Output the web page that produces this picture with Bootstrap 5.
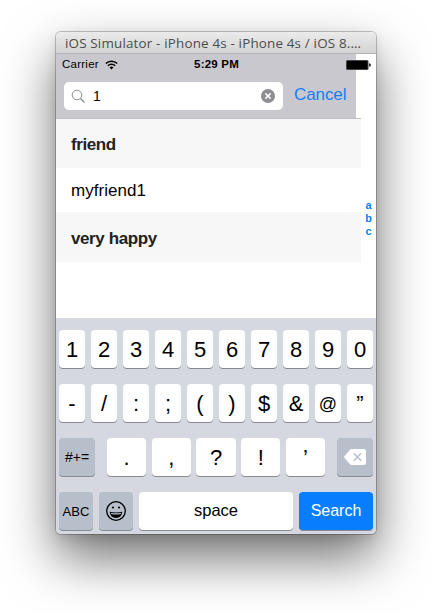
<!DOCTYPE html>
<html lang="en">
<head>
<meta charset="utf-8">
<meta name="viewport" content="width=device-width, initial-scale=1">
<title>iOS Simulator</title>
<link href="https://cdn.jsdelivr.net/npm/bootstrap@5.3.0/dist/css/bootstrap.min.css" rel="stylesheet">
<style>
body{font-family:"Liberation Sans",Arial,sans-serif;color:#000;background:#fff;line-height:1;padding:32px 0 0 56px}
.sim{width:320px;height:502px;border-radius:5px;box-shadow:0 0 0 1px rgba(0,0,0,.22),0 24px 52px rgba(0,0,0,.56),0 5px 12px rgba(0,0,0,.1)}
.window-title{height:22px;padding:0 0 0 9px;background:linear-gradient(#ebebeb,#d3d3d3);border-bottom:1px solid #b5b5b5;border-radius:5px 5px 0 0;color:#4c4c4c;font:13.4px/23px "Open Sans","Noto Sans",sans-serif;letter-spacing:.18px;white-space:nowrap}
.top-area{height:65px;background:linear-gradient(90deg,#c9c8ce 300px,#fff 300px);position:relative}
.top-area::after{content:"";position:absolute;left:0;bottom:0;width:305px;height:1px;background:#c0bfc5}
.status{height:20px;padding:1px 5px 0 6px;font-size:11.5px}
.status>div{flex:1 1 0}
.carrier{letter-spacing:.25px}
.wifi{margin-left:6px}
.clock{font-weight:700;letter-spacing:.2px}
.search-box{width:219px;height:28px;margin:8px 0 0 8px;padding:0 8px 0 7px;background:#fff;border-radius:5px;font-size:14px}
.query{margin-left:7px}
.cancel{color:#147efb;font-size:17px;letter-spacing:-.1px;margin:5px 0 0 11px}
.results{height:199px;background:#fff}
.head-row{width:305px;height:50px;background:#f7f7f7;color:#222;font-weight:700;font-size:17px;letter-spacing:-.4px;padding:2px 0 0 15px}
.head-row.first{height:49px}
.item-row{height:44px;font-size:17px;letter-spacing:.05px;padding-left:15px}
.index-list{position:absolute;right:4px;top:80px;color:#087efe;font-size:11px;font-weight:700;line-height:13px;text-align:center}
.keyboard{height:216px;background:#d5d8e0;padding:12px 3px 4px;border-radius:0 0 5px 5px}
.key{display:flex;align-items:center;justify-content:center;height:38px;padding-top:1px;background:#fff;border-radius:4px;box-shadow:0 1px 0 #898b90;font-size:22px;flex:1 1 0;min-width:0}
.keys{gap:6px}
.keys-wide{gap:5.5px;width:218px}
.key-at{font-size:18px}
.key-dark{background:#b7bfcb;font-size:14px;flex:none;padding-top:0}
.w34{width:34px}.w36{width:36px}
.key-abc{font-size:13px;letter-spacing:.1px}
.key-space{flex:0 0 154px;font-size:16.5px;padding:0 0 1px}
.key-search{background:#087eff;color:#fff;font-size:16px;flex:0 0 74px;padding:0}
svg{display:block;flex:none}
</style>
<script src="https://cdn.jsdelivr.net/npm/bootstrap@5.3.0/dist/js/bootstrap.bundle.min.js"></script>
</head>
<body class="min-vh-100">
<main class="sim d-flex flex-column">
  <div class="window-title">iOS Simulator - iPhone 4s - iPhone 4s / iOS 8.…</div>
  <header class="top-area">
    <div class="status d-flex align-items-center">
      <div class="carrier d-flex align-items-center">Carrier
        <svg class="wifi" width="13" height="10" viewBox="0 0 13 10" fill="none" stroke="#000" stroke-width="1.5"><path d="M.8 3.5a8.2 8.2 0 0 1 11.4 0M2.8 5.7a5.3 5.3 0 0 1 7.4 0"/><path d="M4.5 7.4a2.9 2.9 0 0 1 4 0L6.5 9.6z" fill="#000" stroke="none"/></svg>
      </div>
      <div class="clock text-center">5:29 PM</div>
      <div class="d-flex justify-content-end"><svg width="25" height="10" viewBox="0 0 25 10"><rect width="22.5" height="10" rx="1.5" fill="#444"/><rect x="1" y="1" width="20.5" height="8" rx=".7"/><path d="M23.2 3.2Q24.8 3.5 24.8 5T23.2 6.8z"/></svg></div>
    </div>
    <div class="d-flex">
      <div class="search-box d-flex align-items-center">
        <svg width="15" height="15" viewBox="0 0 15 15" fill="none" stroke="#8e8e93"><circle cx="6" cy="6" r="4.8"/><path d="M9.5 9.5l4 4" stroke-width="1.4"/></svg>
        <span class="query">1</span>
        <svg class="ms-auto" width="14" height="14" viewBox="0 0 14 14"><circle cx="7" cy="7" r="7" fill="#8e8e93"/><path d="M4.4 4.4l5.2 5.2M9.6 4.4L4.4 9.6" stroke="#fff" stroke-width="1.5"/></svg>
      </div>
      <div class="cancel d-flex align-items-center">Cancel</div>
    </div>
  </header>
  <section class="results position-relative">
    <div class="head-row first d-flex align-items-center">friend</div>
    <div class="item-row d-flex align-items-center">myfriend1</div>
    <div class="head-row d-flex align-items-center">very happy</div>
    <div class="index-list"><div>a</div><div>b</div><div>c</div></div>
  </section>
  <section class="keyboard d-flex flex-column justify-content-between">
    <div class="keys d-flex"><div class="key">1</div><div class="key">2</div><div class="key">3</div><div class="key">4</div><div class="key">5</div><div class="key">6</div><div class="key">7</div><div class="key">8</div><div class="key">9</div><div class="key">0</div></div>
    <div class="keys d-flex"><div class="key">-</div><div class="key">/</div><div class="key">:</div><div class="key">;</div><div class="key">(</div><div class="key">)</div><div class="key">$</div><div class="key">&amp;</div><div class="key key-at">@</div><div class="key">”</div></div>
    <div class="d-flex justify-content-between">
      <div class="key key-dark w36">#+=</div>
      <div class="keys-wide d-flex"><div class="key">.</div><div class="key">,</div><div class="key">?</div><div class="key">!</div><div class="key">’</div></div>
      <div class="key key-dark w36"><svg width="22" height="16" viewBox="0 0 22 16"><path d="M7.5 0H19.5Q22 0 22 2.5V13.5Q22 16 19.5 16H7.5Q6.5 16 5.8 15L.6 9Q-.2 8 .6 7L5.8 1Q6.5 0 7.5 0Z" fill="#fff"/><path d="M9.7 4.3l7.4 7.4M17.1 4.3l-7.4 7.4" stroke="#b7bfcb" stroke-width="1.4"/></svg></div>
    </div>
    <div class="keys d-flex">
      <div class="key key-dark key-abc w34">ABC</div>
      <div class="key key-dark w34"><svg width="20" height="20" viewBox="0 0 20 20"><circle cx="10" cy="10" r="9.3" fill="none" stroke="#000" stroke-width="1.3"/><circle cx="7" cy="6.5" r="1.1"/><circle cx="13" cy="6.5" r="1.1"/><path d="M3.6 10.8Q10 12.2 16.4 10.8Q15.5 17 10 17T3.6 10.8Z"/><path d="M4.7 11.7Q10 12.8 15.3 11.7L14.8 13Q10 14 5.2 13Z" fill="#b7bfcb"/></svg></div>
      <div class="key key-space">space</div>
      <div class="key key-search">Search</div>
    </div>
  </section>
</main>
</body>
</html>
